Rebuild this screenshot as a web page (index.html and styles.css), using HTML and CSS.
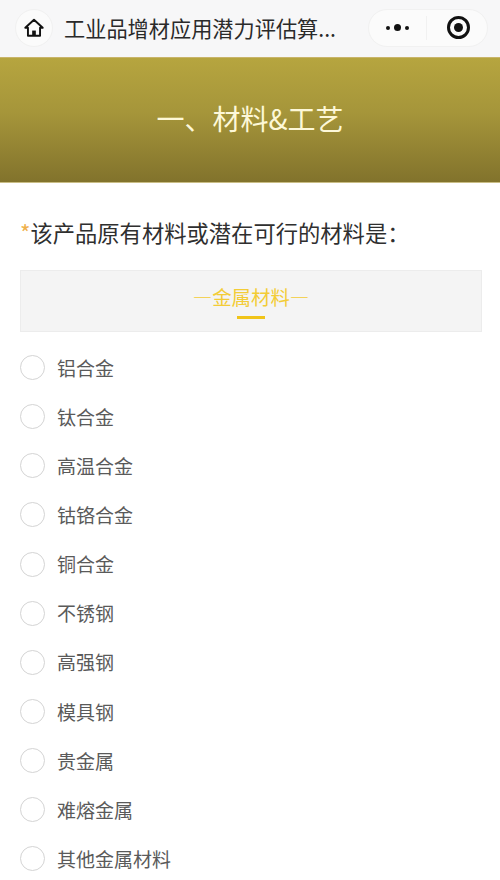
FILE: index.html
```html
<!DOCTYPE html>
<html lang="zh-CN">
<head>
<meta charset="utf-8">
<title>工业品增材应用潜力评估算法</title>
<link rel="stylesheet" href="styles.css">
</head>
<body>
<header class="nav">
  <div class="home">
    <svg class="home-icon" viewBox="0 0 24 24" aria-hidden="true">
      <path d="M2.5 11.8 12 3l9.5 8.8H18.6v8.6H5.4v-8.6z" fill="none" stroke="#111" stroke-width="2.1" stroke-linejoin="round" stroke-linecap="round"/>
      <rect x="10" y="14.8" width="4" height="5.4" fill="#111"/>
    </svg>
  </div>
  <div class="nav-title">工业品增材应用潜力评估算...</div>
  <div class="capsule">
    <div class="capsule-cell">
      <span class="dot"></span><span class="dot dot-big"></span><span class="dot"></span>
    </div>
    <div class="capsule-divider"></div>
    <div class="capsule-cell capsule-cell-right">
      <span class="target"><span class="target-core"></span></span>
    </div>
  </div>
</header>
<section class="banner">一、材料&amp;工艺</section>
<main class="content">
  <h1 class="question"><span class="star">*</span>该产品原有材料或潜在可行的材料是：</h1>
  <div class="category">
    <div class="category-name">—金属材料—</div>
    <div class="category-bar"></div>
  </div>
  <ul class="options">
    <li class="option"><span class="radio"></span><span class="option-label">铝合金</span></li>
    <li class="option"><span class="radio"></span><span class="option-label">钛合金</span></li>
    <li class="option"><span class="radio"></span><span class="option-label">高温合金</span></li>
    <li class="option"><span class="radio"></span><span class="option-label">钴铬合金</span></li>
    <li class="option"><span class="radio"></span><span class="option-label">铜合金</span></li>
    <li class="option"><span class="radio"></span><span class="option-label">不锈钢</span></li>
    <li class="option"><span class="radio"></span><span class="option-label">高强钢</span></li>
    <li class="option"><span class="radio"></span><span class="option-label">模具钢</span></li>
    <li class="option"><span class="radio"></span><span class="option-label">贵金属</span></li>
    <li class="option"><span class="radio"></span><span class="option-label">难熔金属</span></li>
    <li class="option"><span class="radio"></span><span class="option-label">其他金属材料</span></li>
  </ul>
</main>
</body>
</html>
```
FILE: styles.css
```css
* { box-sizing: border-box; }
html, body { margin: 0; padding: 0; }
body {
  width: 500px;
  height: 880px;
  overflow: hidden;
  background: #fff;
  font-family: "Noto Sans CJK SC", "Noto Sans", sans-serif;
}
.nav {
  height: 57px;
  background: #f7f7f8;
  display: flex;
  align-items: center;
  padding: 0 12px 2px 15px;
}
.home {
  width: 38px;
  height: 38px;
  border-radius: 50%;
  background: #fbfbfb;
  border: 1px solid #f1f1f1;
  display: flex;
  align-items: center;
  justify-content: center;
  flex: none;
}
.home-icon { width: 22px; height: 22px; }
.nav-title {
  margin-left: 11px;
  font-size: 21.2px;
  line-height: 30px;
  color: #2a2a2a;
  white-space: nowrap;
  flex: 1;
}
.capsule {
  width: 120px;
  height: 38px;
  border-radius: 19px;
  background: #fbfbfb;
  border: 1px solid #f1f1f1;
  display: flex;
  align-items: center;
  flex: none;
}
.capsule-cell {
  flex: 1;
  display: flex;
  align-items: center;
  justify-content: center;
  gap: 4px;
}
.capsule-cell-right { padding-left: 4px; }
.capsule-divider { width: 1px; height: 24px; background: #f1f1f1; }
.dot { width: 4px; height: 4px; border-radius: 50%; background: #111; }
.dot-big { width: 7px; height: 7px; }
.target {
  width: 23px;
  height: 23px;
  border-radius: 50%;
  border: 3px solid #111;
  display: flex;
  align-items: center;
  justify-content: center;
}
.target-core { width: 9px; height: 9px; border-radius: 50%; background: #111; }
.banner {
  height: 126px;
  background: linear-gradient(180deg, #b6a53f 0%, #a5953a 45%, #82732c 100%);
  border-top: 1px solid #c9b56a;
  border-bottom: 1px solid #c9bd85;
  color: #fdf8d8;
  font-size: 28px;
  display: flex;
  align-items: center;
  justify-content: center;
  padding-bottom: 4px;
}
.content { padding: 0 18px 0 20px; }
.question {
  margin: 33px 0 0;
  font-size: 22.3px;
  font-weight: 400;
  line-height: 32px;
  color: #2f2f2f;
  white-space: nowrap;
}
.star { color: #efb04a; }
.category {
  margin-top: 22px;
  height: 62px;
  background: #f4f4f4;
  border: 1px solid #ececec;
  display: flex;
  flex-direction: column;
  align-items: center;
  padding-top: 12px;
}
.category-name {
  font-size: 19.4px;
  line-height: 28px;
  color: #f3cc36;
}
.category-bar {
  width: 28px;
  height: 3px;
  margin-top: 5px;
  background: #f0c419;
}
.options {
  list-style: none;
  margin: 11px 0 0;
  padding: 0;
}
.option {
  height: 49.15px;
  display: flex;
  align-items: center;
  gap: 12px;
  font-size: 19px;
  color: #5a5a5a;
}
.option-label { line-height: 24px; }
.radio {
  width: 25px;
  height: 25px;
  border-radius: 50%;
  border: 1.5px solid #d4d4d4;
  flex: none;
}
```
